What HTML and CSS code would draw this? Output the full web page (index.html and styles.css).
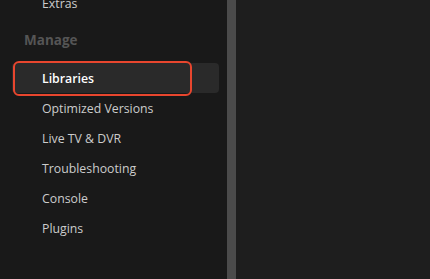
FILE: index.html
```html
<!DOCTYPE html>
<html lang="en">
<head>
  <meta charset="UTF-8">
  <meta name="viewport" content="width=device-width, initial-scale=1.0">
  <title>Settings</title>
  <link rel="stylesheet" href="styles.css">
</head>
<body>
<div class="layout">
  <div class="sidebar">
    <div class="nav">
      <a class="item prev" href="#">Extras</a>
      <div class="group">Manage</div>
      <a class="item active" href="#">Libraries</a>
      <a class="item" href="#">Optimized Versions</a>
      <a class="item" href="#">Live TV &amp; DVR</a>
      <a class="item" href="#">Troubleshooting</a>
      <a class="item" href="#">Console</a>
      <a class="item" href="#">Plugins</a>
    </div>
    <div class="scrollbar"></div>
  </div>
  <div class="content"></div>
</div>
</body>
</html>
```

FILE: styles.css
```css
body {
  font-family: "Open Sans", "Noto Sans", sans-serif;
  margin: 0;
  padding: 0;
  background-color: #1e1e1e;
}
.layout {
  display: flex;
  height: 279px;
  overflow: hidden;
}
.sidebar {
  display: flex;
  width: 236px;
  background-color: #191919;
}
.nav {
  flex: 1;
  display: flex;
  flex-direction: column;
  padding: 0 8px 0 12px;
  margin-top: -12px;
}
.item {
  display: flex;
  align-items: center;
  height: 30px;
  padding-left: 30px;
  color: #cccccc;
  font-size: 12.3px;
  text-decoration: none;
  border-radius: 4px;
}
.group {
  height: 34px;
  display: flex;
  align-items: center;
  padding: 5px 0 0 12px;
  color: #555;
  font-size: 13.5px;
  font-weight: bold;
  margin-bottom: 6px;
}
.item.active {
  position: relative;
  background-color: #2a2a2a;
  color: #fff;
  font-weight: 600;
}
.item.active::after {
  content: "";
  position: absolute;
  left: 1px;
  top: -2px;
  width: 175px;
  height: 31px;
  border: 2.5px solid #e8462e;
  border-radius: 6px;
}
.scrollbar {
  width: 9px;
  background-color: #4b4b4b;
}
.content {
  flex: 1;
  background-color: #1e1e1e;
}
```
